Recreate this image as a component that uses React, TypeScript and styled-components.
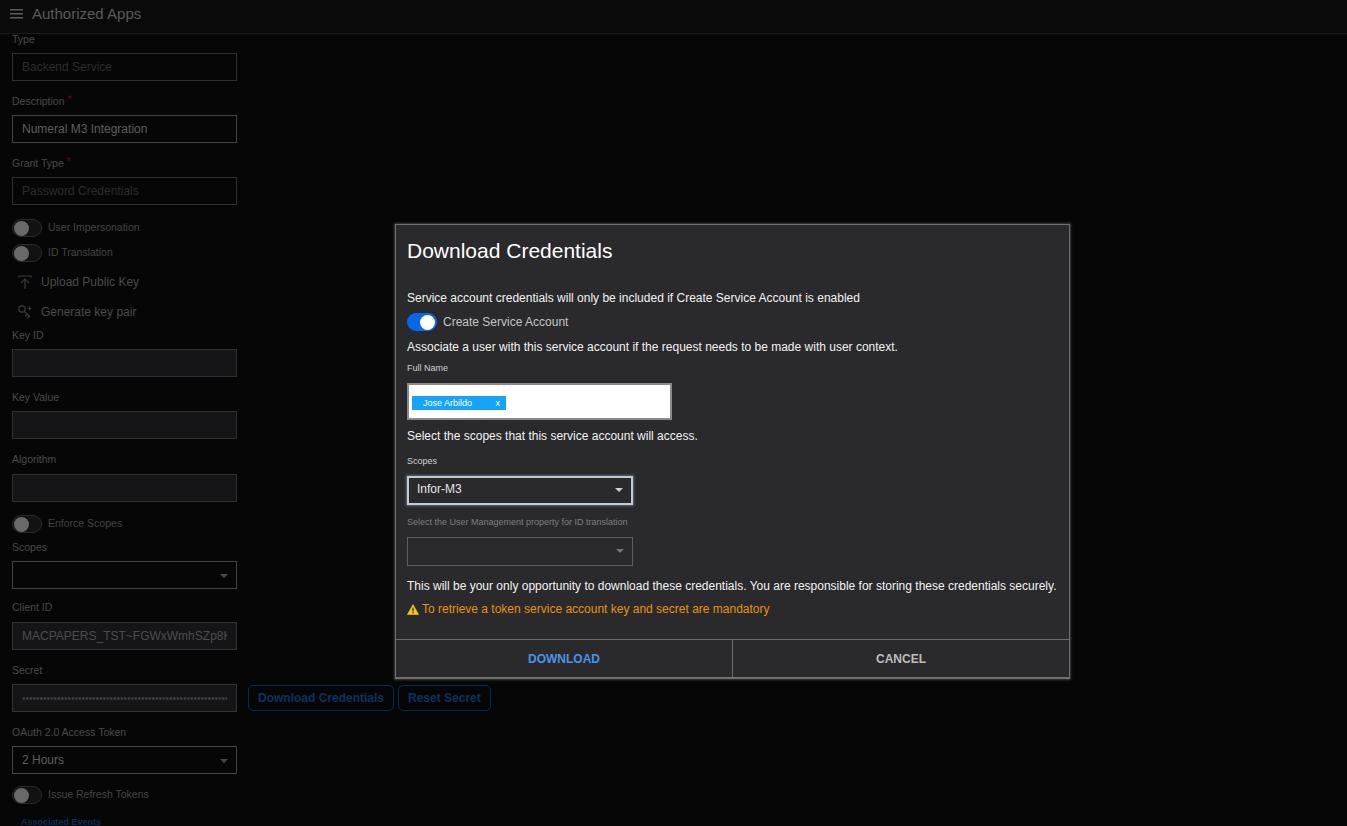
import React from "react";
import styled, { createGlobalStyle } from "styled-components";

const Global = createGlobalStyle`
  html, body { margin: 0; padding: 0; height: 100%; background: #000; overflow: hidden; }
  body { font-family: "Liberation Sans", Arial, sans-serif; }
  #root { height: 100%; }
`;

const Page = styled.div`
  position: relative;
  width: 100%;
  height: 826px;
  background: #060607;
  overflow: hidden;
  display: flex;
  flex-direction: column;
`;
const TopBar = styled.header`
  flex: 0 0 34px;
  box-sizing: border-box;
  height: 34px;
  display: flex;
  align-items: center;
  gap: 8px;
  padding: 0 10px 6px;
  background: #0a0a0b;
  border-bottom: 1px solid #1c1c1c;
  color: #5a5a5a;
  font-size: 15px;
  position: relative;
  z-index: 1;
`;
const Form = styled.main`
  flex: 1;
  min-height: 0;
  overflow: hidden;
  padding: 0 12px;
  margin-top: -2px;
`;
const Field = styled.div<{ $mb?: number }>`
  margin-bottom: ${(p) => p.$mb ?? 13}px;
`;
const Label = styled.div<{ $mb?: number }>`
  height: 14px;
  line-height: 14px;
  margin-bottom: ${(p) => p.$mb ?? 7}px;
  font-size: 10.5px;
  color: #4a4a4a;
`;
const Star = styled.span`
  color: #5c0f0f;
  margin-left: 3px;
  vertical-align: 2px;
  line-height: 0;
`;
const Row = styled.div`
  display: flex;
  align-items: flex-start;
  gap: 11px;
`;
const Input = styled.div<{ $variant?: "empty" | "filled" | "plain" }>`
  box-sizing: border-box;
  width: 225px;
  height: 28px;
  padding: 0 9px;
  display: flex;
  align-items: center;
  overflow: hidden;
  white-space: nowrap;
  font-size: 12px;
  border: 1px solid ${(p) => (p.$variant === "plain" ? "#444" : "#2f2f2f")};
  background: ${(p) => (p.$variant === "filled" ? "#151517" : "#060607")};
  color: ${(p) => (p.$variant === "plain" ? "#5e5e5e" : "#2c2c2c")};
`;
const ReadOnly = styled(Input)`
  background: #151517;
  color: #4c4c4c;
  border-color: #333;
`;
const Clip = styled.span`
  display: block;
  width: 100%;
  overflow: hidden;
`;
const Dots = styled(Clip)`
  font-size: 10px;
  color: #3f3f3f;
`;
const Select = styled(Input)`
  justify-content: space-between;
  padding-right: 8px;
`;
const Caret = styled.span<{ $color?: string }>`
  width: 0;
  height: 0;
  margin-top: 2px;
  border-left: 4px solid transparent;
  border-right: 4px solid transparent;
  border-top: 4px solid ${(p) => p.$color || "#4a4a4a"};
`;
const ToggleRow = styled.div<{ $mb?: number }>`
  display: flex;
  align-items: center;
  gap: 6px;
  height: 18px;
  margin-bottom: ${(p) => p.$mb ?? 7}px;
  font-size: 10.5px;
  color: #454545;
`;
const ToggleText = styled.span`
  margin-bottom: 3px;
`;
const Track = styled.span<{ $on?: boolean }>`
  box-sizing: border-box;
  width: 30px;
  height: 18px;
  flex: none;
  border-radius: 9px;
  display: flex;
  align-items: center;
  padding: 0 1px;
  justify-content: ${(p) => (p.$on ? "flex-end" : "flex-start")};
  background: ${(p) => (p.$on ? "#0868e8" : "#121213")};
  border: 1px solid ${(p) => (p.$on ? "#0868e8" : "#2a2a2a")};
`;
const Knob = styled.span<{ $on?: boolean }>`
  width: 15px;
  height: 15px;
  border-radius: 50%;
  background: ${(p) => (p.$on ? "#fff" : "#696969")};
`;
const ActionGroup = styled.div`
  margin-bottom: 1px;
`;
const ActionRow = styled.div`
  display: flex;
  align-items: center;
  gap: 8px;
  height: 30px;
  padding-left: 5px;
  font-size: 12px;
  color: #4a4a4a;
`;
const GhostButton = styled.div`
  box-sizing: border-box;
  height: 26px;
  padding: 0 9px;
  margin-top: 1px;
  display: flex;
  align-items: center;
  border: 1px solid #072a55;
  border-radius: 5px;
  color: #0a3262;
  font-size: 12px;
  font-weight: 700;
  white-space: nowrap;
`;
const Buttons = styled.div`
  display: flex;
  gap: 4px;
`;
const EventsLink = styled.div`
  margin: 13px 0 0 9px;
  font-size: 9px;
  font-weight: 700;
  color: #07305a;
`;

const Overlay = styled.div`
  position: absolute;
  inset: 0;
  z-index: 2;
  display: flex;
  align-items: flex-start;
  padding: 224px 0 0 395px;
`;
const Modal = styled.section`
  box-sizing: border-box;
  width: 675px;
  height: 455px;
  background: #2a2a2d;
  border: 1px solid #707070;
  border-bottom-width: 2px;
  box-shadow: 0 0 2px 1px rgba(255, 255, 255, 0.22);
  display: flex;
  flex-direction: column;
  color: #fff;
  font-size: 12px;
`;
const ModalBody = styled.div`
  flex: 1;
  min-height: 0;
  padding: 0 11px;
`;
const Title = styled.h2`
  margin: 14px 0 0;
  height: 24px;
  line-height: 24px;
  font-size: 21px;
  font-weight: 400;
  color: #fff;
`;
const Para = styled.p<{ $mt: number }>`
  margin: ${(p) => p.$mt}px 0 0;
  height: 14px;
  line-height: 14px;
  white-space: nowrap;
  color: #f2f2f2;
`;
const ModalToggle = styled.div`
  display: flex;
  align-items: center;
  gap: 6px;
  height: 18px;
  margin-top: 8px;
  color: #c4c4c4;
`;
const SmallLabel = styled.div<{ $mt: number; $dim?: boolean }>`
  margin-top: ${(p) => p.$mt}px;
  height: 12px;
  line-height: 12px;
  font-size: 9px;
  white-space: nowrap;
  color: ${(p) => (p.$dim ? "#7d7d7f" : "#d0d0d0")};
`;
const NameBox = styled.div`
  box-sizing: border-box;
  width: 265px;
  height: 37px;
  margin-top: 9px;
  background: #fff;
  border: 2px solid #8a8a8a;
  display: flex;
  align-items: center;
  padding: 2px 0 0 3px;
`;
const Chip = styled.span`
  box-sizing: border-box;
  width: 94px;
  height: 14px;
  background: #17a4f7;
  color: #fff;
  font-size: 9px;
  display: flex;
  align-items: center;
  justify-content: space-between;
  padding: 0 6px 0 11px;
`;
const ModalSelect = styled.div<{ $disabled?: boolean }>`
  box-sizing: border-box;
  width: 226px;
  height: 29px;
  margin-top: 9px;
  display: flex;
  align-items: center;
  justify-content: space-between;
  padding: 0 8px 3px 8px;
  font-size: 12px;
  color: #e6e6e6;
  border: ${(p) => (p.$disabled ? "1px solid #5d5d5f" : "2px solid #c8c8c8")};
  box-shadow: ${(p) => (p.$disabled ? "none" : "0 0 2px 1px rgba(120, 170, 220, 0.5)")};
`;
const Warning = styled.div`
  display: flex;
  align-items: center;
  gap: 3px;
  height: 14px;
  margin-top: 9px;
  color: #e8920c;
  white-space: nowrap;
`;
const Footer = styled.footer`
  flex: 0 0 38px;
  box-sizing: border-box;
  display: grid;
  grid-template-columns: 337px 1fr;
  border-top: 1px solid #6c6c6c;
`;
const FooterButton = styled.div<{ $primary?: boolean }>`
  display: flex;
  align-items: center;
  justify-content: center;
  font-size: 12px;
  font-weight: 700;
  color: ${(p) => (p.$primary ? "#4a94e6" : "#bdbdbd")};
  border-right: ${(p) => (p.$primary ? "1px solid #6c6c6c" : "none")};
`;

const Menu = () => (
  <svg width="14" height="10" viewBox="0 0 14 10" fill="#5d5d5d">
    <rect y="0" width="13" height="1.5" />
    <rect y="4" width="13" height="1.5" />
    <rect y="8" width="13" height="1.5" />
  </svg>
);
const UploadIcon = () => (
  <svg width="16" height="16" viewBox="0 0 16 16" fill="none" stroke="#3c3c3c" strokeWidth="1.2">
    <path d="M2 3.5V2h12v1.5" />
    <path d="M8 15V5M3.8 9.2 8 5l4.2 4.2" />
  </svg>
);
const KeyIcon = () => (
  <svg width="16" height="16" viewBox="0 0 16 16" fill="none" stroke="#3c3c3c" strokeWidth="1.2">
    <circle cx="5" cy="5" r="3.2" />
    <path d="M7.5 7.5 13 13M10 10.5l-1.8 1.8M12 12.5l-1.8 1.8" />
    <path d="M12.5 2.5v4M10.5 4.5h4" />
  </svg>
);
const WarnIcon = () => (
  <svg width="12" height="11" viewBox="0 0 12 11">
    <path d="M6 .5 11.6 10.5H.4Z" fill="#f5c518" stroke="#f5c518" strokeLinejoin="round" strokeWidth=".6" />
    <rect x="5.4" y="3.6" width="1.2" height="4" fill="#2a2a2d" />
    <rect x="5.4" y="8.2" width="1.2" height="1.2" fill="#2a2a2d" />
  </svg>
);

const Toggle = ({ on }: { on?: boolean }) => (
  <Track $on={on}>
    <Knob $on={on} />
  </Track>
);

export default function App() {
  return (
    <Page>
      <Global />
      <TopBar>
        <Menu />
        Authorized Apps
      </TopBar>
      <Form>
        <Field>
          <Label>Type</Label>
          <Input>Backend Service</Input>
        </Field>
        <Field>
          <Label>
            Description<Star>*</Star>
          </Label>
          <Input $variant="plain">Numeral M3 Integration</Input>
        </Field>
        <Field $mb={14}>
          <Label>
            Grant Type<Star>*</Star>
          </Label>
          <Input>Password Credentials</Input>
        </Field>
        <ToggleRow>
          <Toggle />
          <ToggleText>User Impersonation</ToggleText>
        </ToggleRow>
        <ToggleRow $mb={5}>
          <Toggle />
          <ToggleText>ID Translation</ToggleText>
        </ToggleRow>
        <ActionGroup>
          <ActionRow>
            <UploadIcon />
            Upload Public Key
          </ActionRow>
          <ActionRow>
            <KeyIcon />
            Generate key pair
          </ActionRow>
        </ActionGroup>
        <Field>
          <Label>Key ID</Label>
          <Input $variant="filled" />
        </Field>
        <Field>
          <Label>Key Value</Label>
          <Input $variant="filled" />
        </Field>
        <Field $mb={13}>
          <Label $mb={8}>Algorithm</Label>
          <Input $variant="filled" />
        </Field>
        <ToggleRow>
          <Toggle />
          <ToggleText>Enforce Scopes</ToggleText>
        </ToggleRow>
        <Field $mb={11}>
          <Label>Scopes</Label>
          <Select $variant="plain">
            <span />
            <Caret />
          </Select>
        </Field>
        <Field>
          <Label $mb={8}>Client ID</Label>
          <ReadOnly>
            <Clip>MACPAPERS_TST~FGWxWmhSZp8Kx2</Clip>
          </ReadOnly>
        </Field>
        <Field>
          <Label>Secret</Label>
          <Row>
            <ReadOnly>
              <Dots>••••••••••••••••••••••••••••••••••••••••••••••••••••••••••••</Dots>
            </ReadOnly>
            <Buttons>
              <GhostButton>Download Credentials</GhostButton>
              <GhostButton>Reset Secret</GhostButton>
            </Buttons>
          </Row>
        </Field>
        <Field $mb={12}>
          <Label>OAuth 2.0 Access Token</Label>
          <Select $variant="plain">
            2 Hours
            <Caret />
          </Select>
        </Field>
        <ToggleRow>
          <Toggle />
          <ToggleText>Issue Refresh Tokens</ToggleText>
        </ToggleRow>
        <EventsLink>Associated Events</EventsLink>
      </Form>
      <Overlay>
        <Modal>
          <ModalBody>
            <Title>Download Credentials</Title>
            <Para $mt={28}>Service account credentials will only be included if Create Service Account is enabled</Para>
            <ModalToggle>
              <Toggle on />
              Create Service Account
            </ModalToggle>
            <Para $mt={9}>Associate a user with this service account if the request needs to be made with user context.</Para>
            <SmallLabel $mt={8}>Full Name</SmallLabel>
            <NameBox>
              <Chip>
                Jose Arbildo <span>x</span>
              </Chip>
            </NameBox>
            <Para $mt={9}>Select the scopes that this service account will access.</Para>
            <SmallLabel $mt={12}>Scopes</SmallLabel>
            <ModalSelect>
              Infor-M3
              <Caret $color="#cfcfcf" />
            </ModalSelect>
            <SmallLabel $mt={11} $dim>
              Select the User Management property for ID translation
            </SmallLabel>
            <ModalSelect $disabled>
              <span />
              <Caret $color="#77777a" />
            </ModalSelect>
            <Para $mt={13}>
              This will be your only opportunity to download these credentials. You are responsible for storing these credentials securely.
            </Para>
            <Warning>
              <WarnIcon />
              To retrieve a token service account key and secret are mandatory
            </Warning>
          </ModalBody>
          <Footer>
            <FooterButton $primary>DOWNLOAD</FooterButton>
            <FooterButton>CANCEL</FooterButton>
          </Footer>
        </Modal>
      </Overlay>
    </Page>
  );
}
